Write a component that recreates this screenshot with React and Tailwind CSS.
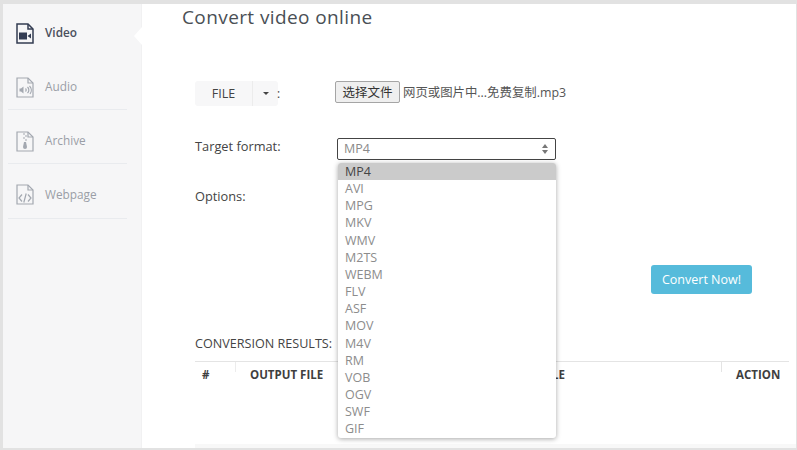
const formats = ["MP4", "AVI", "MPG", "MKV", "WMV", "M2TS", "WEBM", "FLV", "ASF", "MOV", "M4V", "RM", "VOB", "OGV", "SWF", "GIF"];

function FileIcon({ dark, children }) {
  const color = dark ? "#333c52" : "#a3a8b0";
  return (
    <svg width="18" height="21" viewBox="0 0 18 21" fill="none" stroke={color} strokeWidth={dark ? 1.5 : 1.2}>
      <path d="M1 1h11l5 5v14H1z" />
      <path d="M12 1v5h5" />
      {children}
    </svg>
  );
}

const navItems = [
  {
    label: "Video",
    dark: true,
    h: "h-[49px] pt-[5px]",
    icon: (
      <>
        <rect x="3" y="9.5" width="8" height="7" fill="#333c52" stroke="none" />
        <path d="M11.5 13l3.5-2.5v5z" fill="#333c52" stroke="none" />
      </>
    ),
  },
  {
    label: "Audio",
    h: "h-[55px] pt-[10px] border-b border-[#e9ebee]",
    icon: (
      <>
        <path d="M3.5 11.5H5l2.5-2v7L5 14.5H3.5z" fill="#a3a8b0" stroke="none" />
        <path d="M9.5 11.5a2 2 0 010 3M11.5 10a4 4 0 010 6M13.5 9a6 6 0 01.5 8" />
      </>
    ),
  },
  {
    label: "Archive",
    h: "h-[54px] pt-[9px] border-b border-[#e9ebee]",
    icon: (
      <>
        <path d="M7 3h2M9 5h2M7 7h2M9 9h2" />
        <path d="M8 11h2l1 5a2 2 0 11-4 0z" fill="#a3a8b0" stroke="none" />
      </>
    ),
  },
  {
    label: "Webpage",
    h: "h-[55px] pt-[7px] border-b border-[#e9ebee]",
    icon: <path d="M6 10.5l-3 3.5 3 3.5M12 10.5l3 3.5-3 3.5M10.2 9.5l-2.4 9" />,
  },
];

function Sidebar() {
  return (
    <aside className="relative w-[139px] shrink-0 border-r border-[#f1f1f2] bg-[#f6f6f7] pt-[2px]">
      {navItems.map((item) => (
        <div key={item.label} className={`ml-[5px] mr-[14px] flex items-center pl-[8px] ${item.h}`}>
          <div className="flex w-[29px] shrink-0">
            <FileIcon dark={item.dark}>{item.icon}</FileIcon>
          </div>
          <span className={`text-[11.8px] ${item.dark ? "font-semibold text-[#4a4f5c]" : "text-[#9a9ea6]"}`}>{item.label}</span>
        </div>
      ))}
      {/* notch pointing at the active tab */}
      <div className="absolute right-[-1px] top-[23px] h-0 w-0 border-y-[9px] border-r-[8px] border-y-transparent border-r-white" />
    </aside>
  );
}

function FormRow({ label, h, children }) {
  return (
    <div className={`flex ${h}`}>
      <div className="w-[142px] shrink-0 text-[12.8px] leading-[17px] text-[#444]">{label}</div>
      {children}
    </div>
  );
}

export default function App() {
  return (
    <div className="h-[450px] w-[797px] overflow-hidden bg-[#e2e2e2] pb-[2px] pl-[3px] pr-[1px] pt-[4px] font-['Open_Sans',sans-serif]">
      <div className="flex h-[444px] bg-white">
        <Sidebar />
        <main className="relative flex flex-1 flex-col pl-[40px]">
          <h1 className="h-[28px] text-[19px] leading-[27px] tracking-[0.4px] text-[#4a4f55]">Convert video online</h1>

          <div className="pl-[13px] pt-[49px]">
            <div className="flex h-[57px]">
              <div className="flex h-[25px] w-[140px] shrink-0 items-center">
                <div className="flex h-[25px] items-center rounded-[3px] bg-[#f7f7f8] text-[12.5px] text-[#444]">
                  <span className="w-[57px] pt-[1px] text-center">FILE</span>
                  <span className="flex h-full w-[26px] items-center justify-center border-l border-[#ececec]">
                    <span className="h-0 w-0 border-x-[3.5px] border-t-[3.5px] border-x-transparent border-t-[#444]" />
                  </span>
                </div>
                <span className="ml-[-1px] text-[12px] text-[#444]">:</span>
              </div>
              <div className="flex h-[22px] items-center">
                <button className="h-[22px] w-[65px] rounded-[2px] border border-[#a5a5a5] bg-[#efefef] pt-[1px] font-['Noto_Sans_CJK_SC',sans-serif] text-[12.5px] text-[#333]">选择文件</button>
                <span className="ml-[3px] pt-[2px] font-['Open_Sans','Noto_Sans_CJK_SC',sans-serif] text-[12.4px] text-[#555]">网页或图片中...免费复制.mp3</span>
              </div>
            </div>

            <FormRow label="Target format:" h="h-[50px]">
              <div className="h-[22px]">
                <div className="flex h-[22px] w-[219px] items-center justify-between rounded-[2px] border border-[#444] bg-white pl-[6px] pr-[7px] text-[12.5px] text-[#8a8a8a]">
                  <span className="pt-[1px]">MP4</span>
                  <span className="flex flex-col gap-[2px]">
                    <span className="h-0 w-0 border-x-[3px] border-b-[4px] border-x-transparent border-b-[#777]" />
                    <span className="h-0 w-0 border-x-[3px] border-t-[4px] border-x-transparent border-t-[#777]" />
                  </span>
                </div>
              </div>
            </FormRow>

            <FormRow label="Options:" h="h-[77px]">
              <div />
            </FormRow>

            <div className="flex h-[29px] justify-end pr-[44px]">
              <button className="h-[29px] w-[101px] rounded-[3px] bg-[#56bbdb] pt-[1px] text-[12.5px] text-white">Convert Now!</button>
            </div>

            <div className="pt-[41px] text-[12.6px] leading-[18px] text-[#444]">CONVERSION RESULTS:</div>
            <div className="relative mr-[7px] mt-[8px] flex h-[30px] border-t border-[#e4e4e4] pt-[4px] text-[11.5px] font-bold text-[#3f3f3f]">
              <span className="w-[55px] pl-[7px]">#</span>
              <span className="w-[150px]">OUTPUT FILE</span>
              <span className="w-[165px] text-right">SOURCE FILE</span>
              <span className="ml-auto w-[53px]">ACTION</span>
              {/* short column ticks */}
              <span className="absolute left-[40px] top-0 h-[10px] border-l border-[#ececec]" />
              <span className="absolute left-[526px] top-0 h-[10px] border-l border-[#e4e4e4]" />
            </div>
          </div>

          <div className="ml-[13px] mt-auto h-[4px] bg-[#f8f8f8]" />

          {/* open dropdown of the target format select */}
          <ul className="absolute left-[196px] top-[159px] w-[218px] rounded-[3px] bg-white text-[12.5px] leading-[17.15px] text-[#8c8c8c] shadow-[0_1px_5px_rgba(0,0,0,0.35)]">
            {formats.map((f, i) => (
              <li key={f} className={i === 0 ? "rounded-t-[3px] bg-[#cbcbcb] pl-[7px] text-[#444]" : "pl-[7px]"}>
                {f}
              </li>
            ))}
          </ul>
        </main>
      </div>
    </div>
  );
}
